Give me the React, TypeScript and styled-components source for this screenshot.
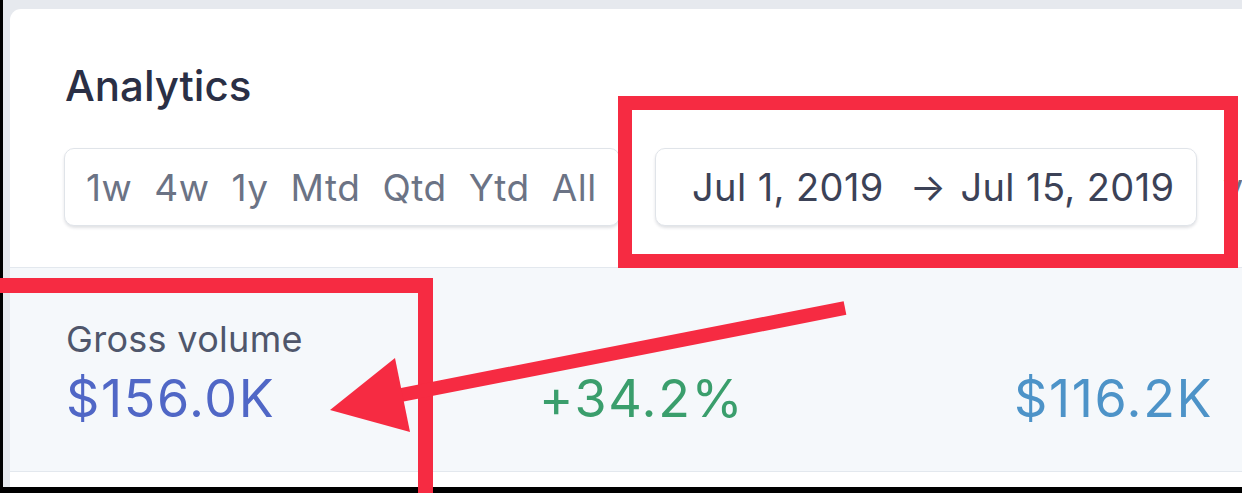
import styled, { createGlobalStyle } from "styled-components";

const GlobalStyle = createGlobalStyle`
  html, body {
    margin: 0;
    padding: 0;
    background: #000;
  }
  body {
    font-family: Inter, "Noto Sans", "Liberation Sans", sans-serif;
    -webkit-font-smoothing: antialiased;
  }
`;

const Screen = styled.div`
  position: relative;
  width: 1242px;
  height: 493px;
  overflow: hidden;
  background: #000;
`;

const Backdrop = styled.div`
  height: 487px;
  margin-left: 3px;
  padding: 9px 0 0 7px;
  box-sizing: border-box;
  background: #e6e9ee;
  overflow: hidden;
`;

const Card = styled.div`
  width: 1300px;
  height: 100%;
  background: #fff;
  border-radius: 11px 0 0 0;
  display: flex;
  flex-direction: column;
  overflow: hidden;
`;

const Header = styled.div`
  padding: 52px 0 0 54px;
  height: 259px;
  box-sizing: border-box;
  border-bottom: 1px solid #e3e8ee;
`;

const Title = styled.h1`
  margin: 0;
  font-size: 42px;
  line-height: 50px;
  font-weight: 500;
  color: #2a2f45;
  padding-left: 1px;
`;

const Controls = styled.div`
  margin-top: 37px;
  display: flex;
  align-items: center;
`;

const Box = styled.div<{ $width: number }>`
  width: ${(p) => p.$width}px;
  height: 78px;
  box-sizing: border-box;
  display: flex;
  align-items: center;
  border: 1px solid #e0e4e9;
  border-radius: 10px;
  background: #fff;
  box-shadow: 0 2px 3px rgba(40, 50, 70, 0.14);
`;

const Presets = styled(Box)`
  padding-left: 21px;
  gap: 22px;
  font-size: 37px;
  letter-spacing: 0.5px;
  color: #6b7385;
`;

const Preset = styled.span`
  white-space: nowrap;
`;

const DateRange = styled(Box)`
  margin-left: 35px;
  padding-left: 36px;
  font-size: 38px;
  letter-spacing: 0.4px;
  color: #3c4257;
  white-space: nowrap;
`;

const Arrow = styled.span`
  margin: 0 14px 0 26px;
`;

const Versus = styled.span`
  margin-left: 26px;
  font-size: 36px;
  color: #6b7385;
`;

const Metrics = styled.div`
  height: 204px;
  box-sizing: border-box;
  padding: 49px 0 0 56px;
  background: #f5f8fb;
  border-bottom: 1px solid #e3e8ee;
`;

const Label = styled.div`
  font-size: 36px;
  line-height: 44px;
  letter-spacing: 0.3px;
  color: #4f566b;
`;

const Values = styled.div`
  margin-top: 9px;
  width: 1147px;
  display: grid;
  grid-template-columns: 473px 1fr auto;
  font-size: 52px;
  line-height: 58px;
  letter-spacing: 1.6px;
`;

const Value = styled.span<{ $color: string }>`
  color: ${(p) => p.$color};
`;

const Annotations = styled.svg`
  position: absolute;
  left: 0;
  top: 0;
  pointer-events: none;
`;

const presets = ["1w", "4w", "1y", "Mtd", "Qtd", "Ytd", "All"];

export default function App() {
  return (
    <>
      <GlobalStyle />
      <Screen>
        <Backdrop>
          <Card>
            <Header>
              <Title>Analytics</Title>
              <Controls>
                <Presets $width={556}>
                  {presets.map((p) => (
                    <Preset key={p}>{p}</Preset>
                  ))}
                </Presets>
                <DateRange $width={542}>
                  Jul 1, 2019<Arrow>→</Arrow>Jul 15, 2019
                </DateRange>
                <Versus>vs</Versus>
              </Controls>
            </Header>
            <Metrics>
              <Label>Gross volume</Label>
              <Values>
                <Value $color="#5067c6">$156.0K</Value>
                <Value $color="#3a9e6c">+34.2%</Value>
                <Value $color="#4d93c8">$116.2K</Value>
              </Values>
            </Metrics>
          </Card>
        </Backdrop>
        <Annotations width="1242" height="493" viewBox="0 0 1242 493">
          <rect x="625" y="103" width="606" height="158" fill="none" stroke="#f62b42" strokeWidth="14" />
          <path d="M0 285.5 H425.5 V493" fill="none" stroke="#f62b42" strokeWidth="15" strokeLinejoin="miter" />
          <line x1="396" y1="396" x2="845" y2="308" stroke="#f62b42" strokeWidth="14" />
          <polygon points="330,410 395,358 410,432" fill="#f62b42" />
        </Annotations>
      </Screen>
    </>
  );
}
